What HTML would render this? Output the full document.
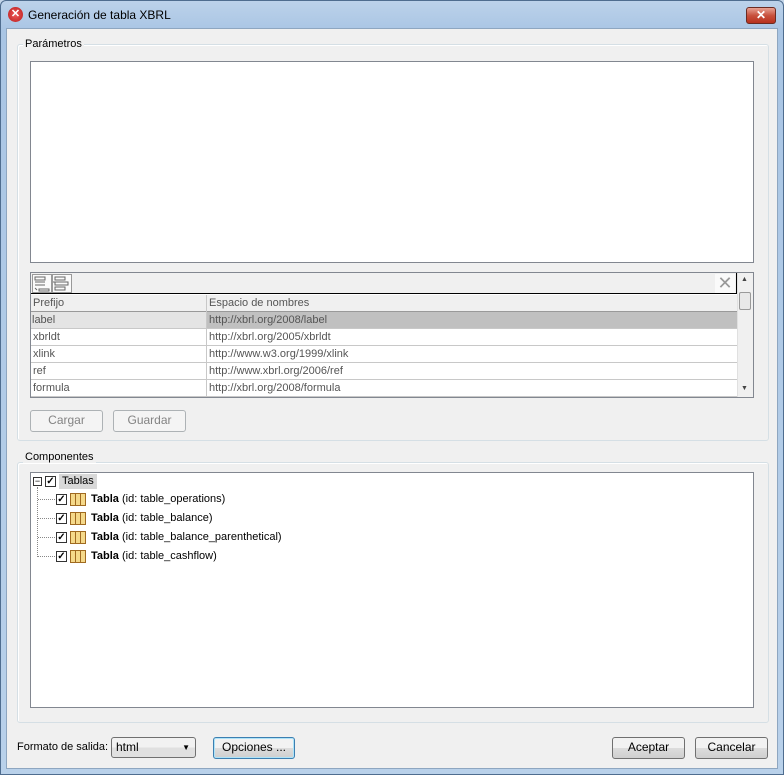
<!DOCTYPE html>
<html><head><style>
*{box-sizing:border-box;margin:0;padding:0}
body{width:784px;height:775px;position:relative;overflow:hidden;font-family:"Liberation Sans",sans-serif;font-size:11px;color:#000;background:#c4d6ea}
.a{position:absolute}
.frame{left:0;top:0;width:784px;height:775px;background:linear-gradient(#bcd2ea,#a9c5e4 30px,#b9d1ea);border:1px solid #4f6d8f;border-radius:6px 6px 0 0}
.body{left:6px;top:28px;width:772px;height:741px;background:#f0f0f0;border:1px solid #8ea6c0}
.grp{border:1px solid #d5dfe5;border-radius:3px;box-shadow:inset 1px 1px 0 #fff}
.lbl{background:#f0f0f0;padding:0 2px;color:#000}
.btn{border:1px solid #707070;border-radius:3px;background:linear-gradient(#f2f2f2 50%,#dddddd 50%,#cfcfcf);text-align:center;line-height:19px;font-size:12px}
.dis{border-color:#adb2b5;color:#838383;background:#f4f4f4}
.row{position:absolute;left:0;width:706px;height:17px;border-bottom:1px solid #c8c8c8;color:#555;line-height:16px}
.row span{position:absolute;left:2px}
.row b{position:absolute;left:178px;font-weight:normal}
.cb{width:11px;height:11px;border:1px solid #333;background:#fff;font-size:10px;line-height:9px;text-align:center;font-weight:bold}
.tbl{width:16px;height:13px;border:1px solid #a06a20;background:repeating-linear-gradient(90deg,#f5d98a 0 4px,#a06a20 4px 5px);}
</style></head><body>
<div class="a frame"></div>
<div class="a" style="left:8px;top:7px;width:15px;height:15px;border-radius:50%;background:radial-gradient(#f05a5a,#b81c1c);color:#fff;font-size:11px;font-weight:bold;text-align:center;line-height:15px">✕</div>
<div class="a" style="left:28px;top:8px;font-size:12px">Generación de tabla XBRL</div>
<div class="a" style="left:746px;top:7px;width:30px;height:17px;border:1px solid #6b2b22;border-radius:3px;background:linear-gradient(#e8a293,#c8513d 50%,#b8311d);color:#fff;font-weight:bold;text-align:center;line-height:15px;font-size:12px">✕</div>
<div class="a body"></div>

<div class="a grp" style="left:17px;top:44px;width:752px;height:397px"></div>
<div class="a lbl" style="left:23px;top:38px">Parámetros</div>
<div class="a" style="left:30px;top:61px;width:724px;height:202px;background:#fff;border:1px solid #828790"></div>

<div class="a" style="left:30px;top:272px;width:724px;height:126px;border:1px solid #828790;background:#fff"></div>
<div class="a" style="left:31px;top:273px;width:706px;height:21px;background:#f0f0f0;border-bottom:1px solid #000;border-right:1px solid #000"></div>
<svg class="a" style="left:32px;top:274px" width="40" height="19" viewBox="0 0 40 19" fill="none" stroke="#666">
<rect x="0.5" y="0.5" width="19" height="18" fill="#fafafa" stroke="#999"/>
<rect x="20.5" y="0.5" width="19" height="18" fill="#fafafa" stroke="#999"/>
<path d="M3 3h10v3H3zM3 8h10M3 11h10M7 15h10v2H7zM3 14l2 2"/>
<path d="M23 3h10v3H23zM23 8h13v3H23zM23 13h10v3H23zM21 8h2"/>
</svg>
<div class="a" style="left:715px;top:274px;width:20px;height:19px;color:#999;font-size:18px;line-height:19px;text-align:center;background:#fafafa">✕</div>
<div class="a" style="left:31px;top:295px;width:706px;height:102px">
<div class="row" style="top:0;background:#f0f0f0;border-bottom:1px solid #999"><span>Prefijo</span><b>Espacio de nombres</b></div>
<div class="row" style="top:17px;background:#c0c0c0"><span style="background:#e4e4e4;left:0;width:175px;padding-left:1px">label</span><b>http://xbrl.org/2008/label</b></div>
<div class="row" style="top:34px;background:#fff"><span>xbrldt</span><b>http://xbrl.org/2005/xbrldt</b></div>
<div class="row" style="top:51px;background:#fff"><span>xlink</span><b>http://www.w3.org/1999/xlink</b></div>
<div class="row" style="top:68px;background:#fff"><span>ref</span><b>http://www.xbrl.org/2006/ref</b></div>
<div class="row" style="top:85px;background:#fff"><span>formula</span><b>http://xbrl.org/2008/formula</b></div>
<div class="a" style="left:175px;top:0;width:1px;height:102px;background:#c8c8c8"></div>
</div>
<div class="a" style="left:737px;top:273px;width:16px;height:124px;background:#f0f0f0;border-left:1px solid #e0e0e0"></div>
<div class="a" style="left:741px;top:276px;font-size:7px;color:#444">▲</div>
<div class="a" style="left:739px;top:292px;width:12px;height:18px;border:1px solid #999;border-radius:2px;background:#e8e8e8"></div>
<div class="a" style="left:741px;top:385px;font-size:7px;color:#444">▼</div>

<div class="a btn dis" style="left:30px;top:410px;width:73px;height:22px">Cargar</div>
<div class="a btn dis" style="left:113px;top:410px;width:73px;height:22px">Guardar</div>

<div class="a grp" style="left:17px;top:462px;width:752px;height:261px"></div>
<div class="a lbl" style="left:23px;top:451px">Componentes</div>
<div class="a" style="left:30px;top:472px;width:724px;height:236px;background:#fff;border:1px solid #828790"></div>
<div class="a" style="left:33px;top:477px;width:9px;height:9px;border:1px solid #333;font-size:9px;line-height:6px;text-align:center">−</div>
<div class="a cb" style="left:45px;top:476px">✓</div>
<div class="a" style="left:59px;top:474px;width:38px;height:15px;background:#d8d8d8;padding-left:3px;line-height:15px">Tablas</div>
<div class="a" style="left:37px;top:487px;width:1px;height:70px;border-left:1px dotted #888"></div>
<div class="a" style="left:38px;top:480px">
<div class="a" style="left:0;top:19px;width:17px;border-top:1px dotted #888"></div>
<div class="a" style="left:0;top:38px;width:17px;border-top:1px dotted #888"></div>
<div class="a" style="left:0;top:57px;width:17px;border-top:1px dotted #888"></div>
<div class="a" style="left:0;top:76px;width:17px;border-top:1px dotted #888"></div>
</div>
<div class="a cb" style="left:56px;top:494px">✓</div><div class="a tbl" style="left:70px;top:493px"></div><div class="a" style="left:91px;top:493px;font-size:11px"><b>Tabla</b> (id: table_operations)</div>
<div class="a cb" style="left:56px;top:513px">✓</div><div class="a tbl" style="left:70px;top:512px"></div><div class="a" style="left:91px;top:512px"><b>Tabla</b> (id: table_balance)</div>
<div class="a cb" style="left:56px;top:532px">✓</div><div class="a tbl" style="left:70px;top:531px"></div><div class="a" style="left:91px;top:531px"><b>Tabla</b> (id: table_balance_parenthetical)</div>
<div class="a cb" style="left:56px;top:551px">✓</div><div class="a tbl" style="left:70px;top:550px"></div><div class="a" style="left:91px;top:550px"><b>Tabla</b> (id: table_cashflow)</div>

<div class="a" style="left:17px;top:741px;font-size:11px">Formato de salida:</div>
<div class="a" style="left:111px;top:737px;width:85px;height:21px;border:1px solid #707070;border-radius:3px;background:linear-gradient(#f2f2f2 50%,#e0e0e0 50%);line-height:19px;padding-left:4px;font-size:12px">html<span style="position:absolute;right:5px;font-size:8px">▼</span></div>
<div class="a btn" style="left:213px;top:737px;width:82px;height:22px;border-color:#3c7fb1;box-shadow:inset 0 0 0 1px #aee3f8">Opciones ...</div>
<div class="a btn" style="left:612px;top:737px;width:73px;height:22px">Aceptar</div>
<div class="a btn" style="left:695px;top:737px;width:73px;height:22px">Cancelar</div>
</body></html>
